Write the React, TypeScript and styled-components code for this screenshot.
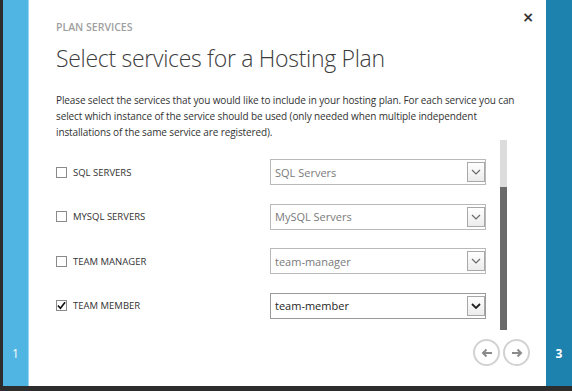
import React from "react";
import styled, { createGlobalStyle } from "styled-components";

const GlobalStyle = createGlobalStyle`
  html, body {
    margin: 0;
    padding: 0;
    background: #2d2d2d;
  }
  body {
    font-family: "Open Sans", "Segoe UI", Arial, sans-serif;
  }
`;

const Screen = styled.div`
  display: flex;
  width: 572px;
  height: 391px;
  box-sizing: border-box;
  padding: 0 0 5px 3px;
  background: #2d2d2d;
`;

const Rail = styled.div<{ $dark?: boolean }>`
  width: 26px;
  display: flex;
  flex-direction: column;
  justify-content: flex-end;
  align-items: center;
  padding-bottom: 24px;
  box-sizing: border-box;
  background: ${(p) => (p.$dark ? "#1d82ae" : "#50b5e2")};
  border-right: ${(p) => (p.$dark ? "none" : "1px solid #9ad6f1")};
  color: #ffffff;
  font-size: 12px;
  font-weight: ${(p) => (p.$dark ? 700 : 400)};
`;

const Panel = styled.div`
  flex: 1;
  display: flex;
  flex-direction: column;
  background: #ffffff;
  min-width: 0;
`;

const Header = styled.div`
  display: flex;
  justify-content: space-between;
  align-items: flex-start;
  padding: 0 12px 0 27px;
`;

const Heading = styled.div`
  padding-top: 20px;
`;

const Eyebrow = styled.div`
  font-size: 10.5px;
  line-height: 14px;
  font-weight: 600;
  color: #a0a0a0;
  text-transform: uppercase;
`;

const Title = styled.h1`
  margin: 7px 0 0;
  font-size: 23px;
  line-height: 34px;
  letter-spacing: -0.3px;
  font-weight: 300;
  color: #3c3c3c;
  white-space: nowrap;
`;

const Close = styled.button`
  margin-top: 9px;
  padding: 0;
  border: none;
  background: transparent;
  font-family: "DejaVu Sans", sans-serif;
  font-size: 14px;
  font-weight: 700;
  line-height: 16px;
  color: #333333;
`;

const Intro = styled.p`
  margin: 17px 0 0;
  padding: 0 20px 0 27px;
  font-size: 10px;
  line-height: 16px;
  letter-spacing: -0.12px;
  color: #333333;
  white-space: nowrap;
`;

const Body = styled.div`
  display: flex;
  height: 190px;
  padding: 0 39px 0 27px;
`;

const List = styled.div`
  flex: 1;
  display: flex;
  flex-direction: column;
  gap: 18.5px;
  padding-top: 19px;
`;

const Row = styled.div`
  display: flex;
  align-items: center;
  height: 26px;
`;

const Option = styled.label`
  width: 214px;
  display: flex;
  align-items: center;
  gap: 6px;
  font-size: 9.5px;
  color: #333333;
  text-transform: uppercase;
`;

const Box = styled.span`
  width: 11px;
  height: 11px;
  box-sizing: border-box;
  border: 1px solid #8a8a8a;
  background: #ffffff;
  display: flex;
  align-items: center;
  justify-content: center;
`;

const Select = styled.div<{ $active?: boolean }>`
  width: 216px;
  height: 26px;
  box-sizing: border-box;
  display: flex;
  align-items: center;
  justify-content: space-between;
  padding: 0 0 0 4px;
  border: 1px solid ${(p) => (p.$active ? "#9a9a9a" : "#b9b9b9")};
  font-size: 11px;
  color: ${(p) => (p.$active ? "#1e1e1e" : "#7a7a7a")};
`;

const Arrow = styled.span<{ $active?: boolean }>`
  width: 18px;
  height: 20px;
  box-sizing: border-box;
  display: flex;
  align-items: center;
  justify-content: center;
  border: 1px solid #a8a8a8;
  background: linear-gradient(#ffffff, #ececec);
  color: ${(p) => (p.$active ? "#222222" : "#6a6a6a")};
`;

const Track = styled.div`
  width: 7px;
  margin-left: 13px;
  display: flex;
  flex-direction: column;
  justify-content: flex-end;
  background: #dcdcdc;
`;

const Thumb = styled.div`
  height: 143px;
  background: #6a6a6a;
`;

const Footer = styled.div`
  display: flex;
  justify-content: flex-end;
  gap: 3px;
  margin-top: 9px;
  padding-right: 16px;
`;

const NavButton = styled.button`
  width: 27px;
  height: 27px;
  padding: 0;
  border-radius: 50%;
  border: 2px solid #d2d2d2;
  background: #ffffff;
  color: #8a8a8a;
  display: flex;
  align-items: center;
  justify-content: center;
`;

type Service = { label: string; value: string; checked?: boolean };

const services: Service[] = [
  { label: "SQL Servers", value: "SQL Servers" },
  { label: "MySQL Servers", value: "MySQL Servers" },
  { label: "Team Manager", value: "team-manager" },
  { label: "Team Member", value: "team-member", checked: true },
];

const Chevron = ({ bold }: { bold?: boolean }) => (
  <svg width="10" height="6" viewBox="0 0 10 6">
    <path
      d="M1 1 L5 5 L9 1"
      fill="none"
      stroke="currentColor"
      strokeWidth={bold ? 1.8 : 1.2}
    />
  </svg>
);

const Check = () => (
  <svg width="10" height="9" viewBox="0 0 10 9">
    <path d="M1 4.5 L3.8 7.5 L9 1" fill="none" stroke="#111" strokeWidth="1.8" />
  </svg>
);

const ArrowIcon = ({ dir }: { dir: "left" | "right" }) => (
  <svg width="12" height="10" viewBox="0 0 12 10">
    {dir === "left" ? (
      <path d="M11 5 H2 M5.5 1.5 L2 5 L5.5 8.5" fill="none" stroke="currentColor" strokeWidth="2" />
    ) : (
      <path d="M1 5 H10 M6.5 1.5 L10 5 L6.5 8.5" fill="none" stroke="currentColor" strokeWidth="2" />
    )}
  </svg>
);

const App = () => {
  return (
    <>
      <GlobalStyle />
      <Screen>
        <Rail>1</Rail>
        <Panel>
          <Header>
            <Heading>
              <Eyebrow>Plan services</Eyebrow>
              <Title>Select services for a Hosting Plan</Title>
            </Heading>
            <Close aria-label="close">×</Close>
          </Header>
          <Intro>
            Please select the services that you would like to include in your hosting plan. For each service you can
            <br />
            select which instance of the service should be used (only needed when multiple independent
            <br />
            installations of the same service are registered).
          </Intro>
          <Body>
            <List>
              {services.map((s) => (
                <Row key={s.label}>
                  <Option>
                    <Box>{s.checked && <Check />}</Box>
                    {s.label}
                  </Option>
                  <Select $active={s.checked}>
                    {s.value}
                    <Arrow $active={s.checked}>
                      <Chevron bold={s.checked} />
                    </Arrow>
                  </Select>
                </Row>
              ))}
            </List>
            <Track>
              <Thumb />
            </Track>
          </Body>
          <Footer>
            <NavButton aria-label="back">
              <ArrowIcon dir="left" />
            </NavButton>
            <NavButton aria-label="next">
              <ArrowIcon dir="right" />
            </NavButton>
          </Footer>
        </Panel>
        <Rail $dark>3</Rail>
      </Screen>
    </>
  );
};

export default App;
